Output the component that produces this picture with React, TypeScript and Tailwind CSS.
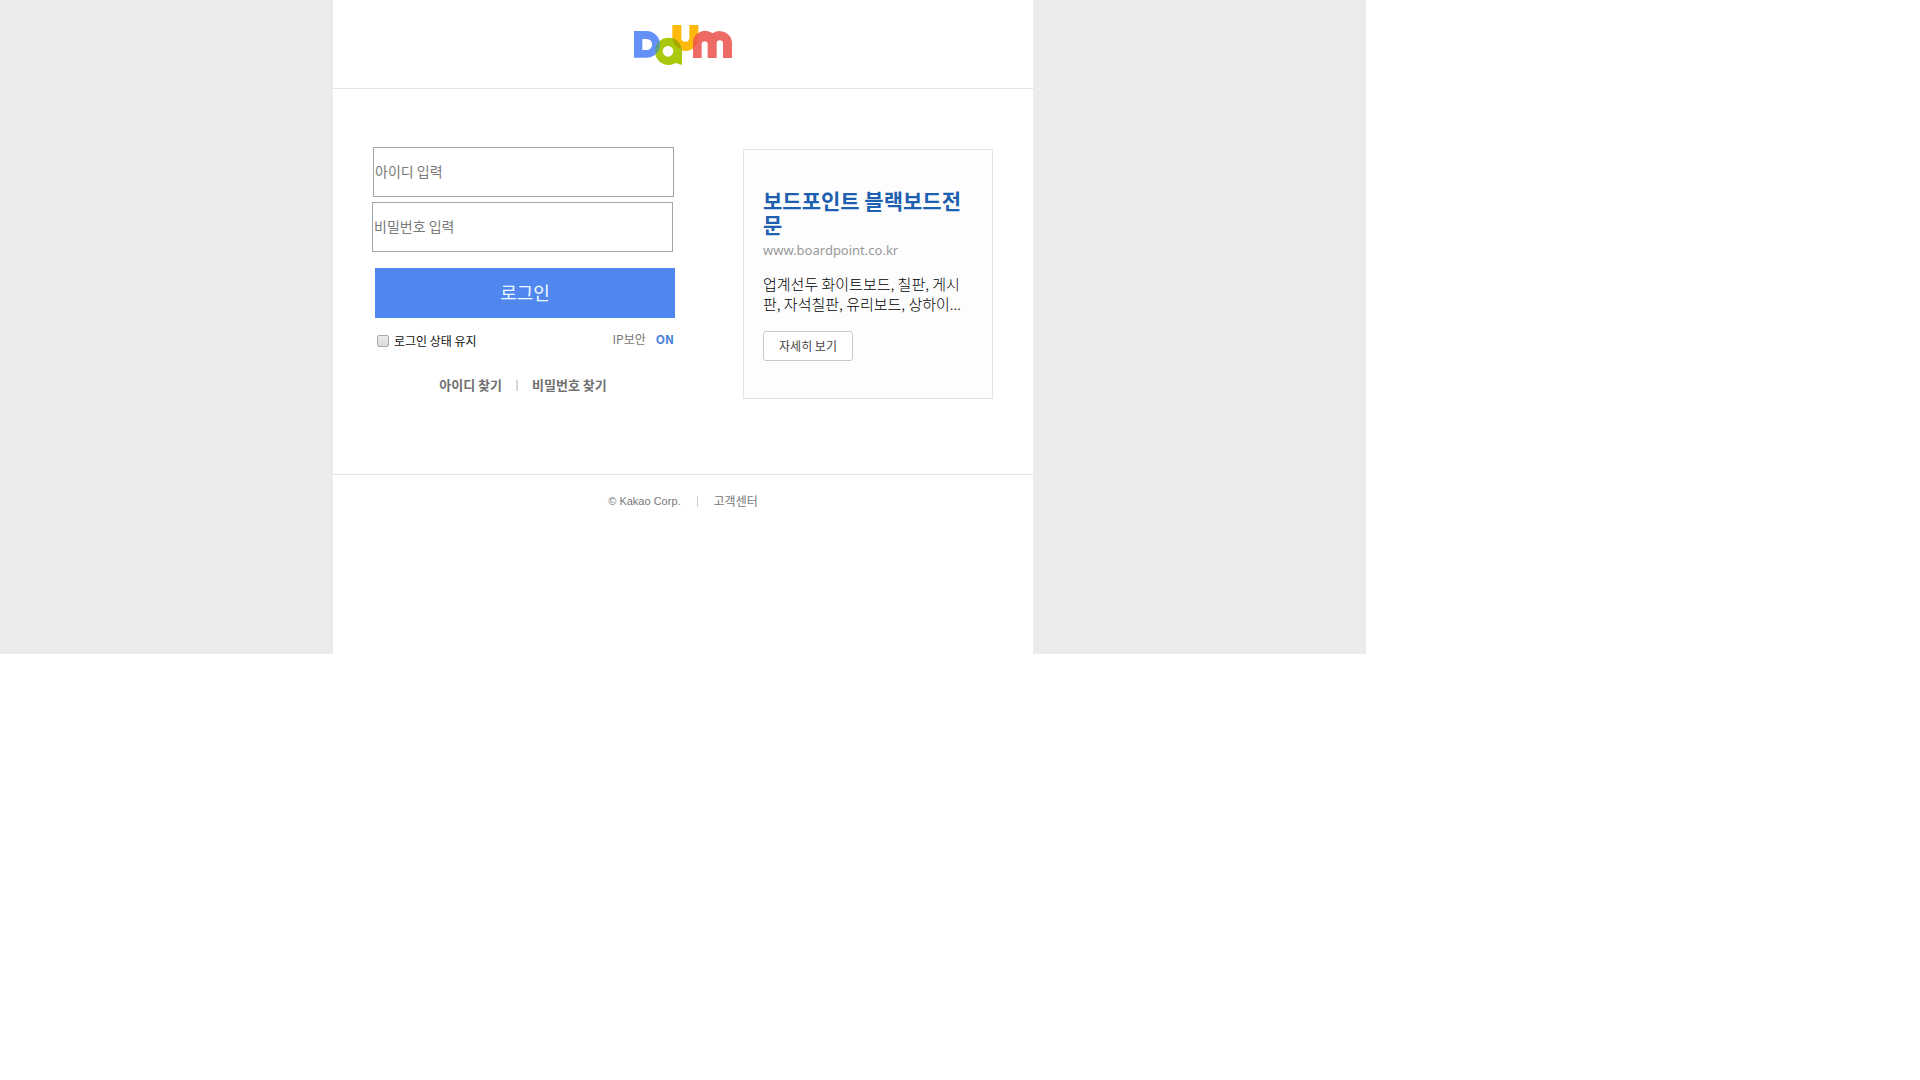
function DaumLogo() {
  return (
    <svg viewBox="42 45 294 120" className="h-10 w-[98px]" role="img" aria-label="Daum">
      <path d="M157 45h27v38a12 12 0 0 0 24 0V45h27v39a39 39 0 0 1-78 0z" fill="#ffb90a" />
      <path
        fillRule="evenodd"
        d="M146 83a41 41 0 0 1 40 41v41l-19-6a41 41 0 1 1-21-76zM144 108a16 16 0 1 0 0 32a16 16 0 1 0 0-32z"
        fill="#a9c90e"
      />
      <path d="M157 84a41 41 0 0 1 28 34a39 39 0 0 1-28-34z" fill="#a8a800" />
      <path
        fillRule="evenodd"
        d="M42 63h38a40 40 0 0 1 0 80H42zM67 87v33h13a16.500 16.500 0 0 0 0-33z"
        fill="#6491f8"
      />
      <path d="M107 112a41 41 0 0 1 11-19a40 40 0 0 1-11 39a41 41 0 0 1 0-20z" fill="#63a07a" />
      <path
        d="M219 144v-44a37 37 0 0 1 59-30a37 37 0 0 1 58 30v44h-27v-44a9.500 9.500 0 0 0-19 0v44h-27v-44a9.500 9.500 0 0 0-18 0v44z"
        fill="#ee6a64"
      />
      <path d="M219 98a37 37 0 0 1 16-30v16a39 39 0 0 1-16 32z" fill="#f0653f" />
    </svg>
  );
}

function LoginForm() {
  return (
    <form className="w-[304px] pt-[58px]" onSubmit={(e) => e.preventDefault()}>
      <input
        type="text"
        aria-label="아이디 입력"
        placeholder="아이디 입력"
        className="ml-px block h-[50px] w-[301px] border border-[#9fa6aa] bg-white px-px pb-0.5 text-sm text-[#222] placeholder:text-[#7a7a7a]"
      />
      <input
        type="password"
        aria-label="비밀번호 입력"
        placeholder="비밀번호 입력"
        className="mt-[5px] block h-[50px] w-[301px] border border-[#a3a6aa] bg-white px-px pb-0.5 text-sm text-[#222] placeholder:text-[#7a7a7a]"
      />
      <button
        type="submit"
        className="mt-4 ml-[3px] block h-[50px] w-[300px] bg-[#4f87ef] pb-0.5 text-lg text-[#effaff]"
      >
        로그인
      </button>
      <div className="ml-[5px] flex items-start justify-between pt-[11px] text-xs leading-5">
        <label className="flex items-center gap-[5px] pt-0.5 text-[#111]">
          <input
            type="checkbox"
            className="size-3 appearance-none rounded-[2px] border border-[#a9a9a9] bg-linear-to-b from-[#ededed] to-[#d9d9d9] checked:bg-[#4f87ef]"
          />
          로그인 상태 유지
        </label>
        <div className="flex gap-2.5 pr-0.5 text-[#777]">
          <a href="#ip-security">IP보안</a>
          <button type="button" className="font-bold text-[#4a80dd]">
            ON
          </button>
        </div>
      </div>
      <div className="flex items-center justify-center pt-[22px] pr-0.5 text-[13px] leading-6 font-bold text-[#707070]">
        <a href="#find-id">아이디 찾기</a>
        <span className="mx-3.5 h-[11px] w-0.5 bg-[#d8d8d8]" />
        <a href="#find-password">비밀번호 찾기</a>
      </div>
    </form>
  );
}

function AdCard() {
  return (
    <aside className="mt-[60px] h-[250px] w-[250px] border border-[#e3e3e3] bg-[#fdfdfd] px-[19px] pt-[38px]">
      <h2 className="text-[21px] leading-6 font-bold break-all text-[#1f5fb0]">
        <a href="#boardpoint">보드포인트 블랙보드전문</a>
      </h2>
      <p className="mt-1 font-['Noto_Sans','Noto_Sans_CJK_KR',sans-serif] text-[13px] leading-5 text-[#999]">
        www.boardpoint.co.kr
      </p>
      <p className="mt-3.5 text-[15px] leading-5 font-light break-all text-black">
        업계선두 화이트보드, 칠판, 게시판, 자석칠판, 유리보드, 상하이...
      </p>
      <button
        type="button"
        className="mt-[17px] h-[30px] w-[90px] rounded-[3px] border border-[#c8c8c8] bg-white text-xs text-[#444]"
      >
        자세히 보기
      </button>
    </aside>
  );
}

export default function App() {
  return (
    <div className="w-full max-w-[1366px] bg-[#ebebed] font-['Noto_Sans_CJK_KR',sans-serif]">
      <div className="mx-auto min-h-[654px] w-full max-w-[700px] bg-white">
        <header className="flex justify-center border-b border-[#e2e2e2] pt-[25px] pb-[23px]">
          <a href="#home">
            <DaumLogo />
          </a>
        </header>
        <main className="flex min-h-[385px] justify-between pr-10 pl-[39px]">
          <LoginForm />
          <AdCard />
        </main>
        <footer className="flex items-center justify-center border-t border-[#e2e2e2] pt-4 text-xs leading-5 text-[#777]">
          <span className="font-['Liberation_Sans',sans-serif] text-[11px]">© Kakao Corp.</span>
          <span className="mx-4 h-[11px] w-px bg-[#d0d0d0]" />
          <a href="#help">고객센터</a>
        </footer>
      </div>
    </div>
  );
}
